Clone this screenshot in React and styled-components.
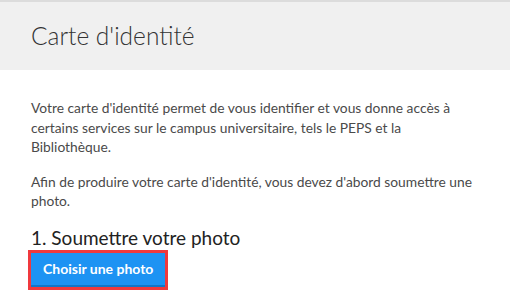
import React from 'react'
import styled, { createGlobalStyle } from 'styled-components'

const GlobalStyle = createGlobalStyle`
    body {
        margin: 0;
        background: #fff;
        font-family: "Lato", "Open Sans", sans-serif;
        color: #444;
    }
`

const Page = styled.div`
    width: 510px;
    height: 294px;
    overflow: hidden;
`

const Header = styled.header`
    background: #f0f0f0;
    border-top: 2px solid #dcdcdc;
    height: 68px;
    display: flex;
    align-items: center;
    padding: 0 31px;
`

const Title = styled.h1`
    margin: 0 0 2px;
    font-size: 24.5px;
    font-weight: 300;
    color: #333;
`

const Content = styled.main`
    padding: 28px 31px 0;
`

const Text = styled.p`
    margin: 0 0 15px;
    font-size: 13.8px;
    line-height: 19.5px;
    color: #4a4a4a;
`

const Step = styled.h2`
    margin: 0;
    font-size: 19px;
    line-height: 24px;
    font-weight: 400;
    color: #222;
`

const Highlight = styled.div`
    display: inline-block;
    border: 3px solid #f0393d;
    margin-left: -3px;
`

const Button = styled.button`
    display: block;
    border: none;
    border-bottom: 2px solid #1276c8;
    background: #1d93f3;
    color: #fff;
    font-family: inherit;
    font-size: 14px;
    font-weight: 700;
    padding: 0 12px;
    height: 34px;
    cursor: pointer;
`

const App = () => {
    return (
        <Page>
            <GlobalStyle />
            <Header>
                <Title>Carte d'identité</Title>
            </Header>
            <Content>
                <Text>
                    Votre carte d'identité permet de vous identifier et vous donne accès à
                    certains services sur le campus universitaire, tels le PEPS et la
                    Bibliothèque.
                </Text>
                <Text>
                    Afin de produire votre carte d'identité, vous devez d'abord soumettre une
                    photo.
                </Text>
                <Step>1. Soumettre votre photo</Step>
                <Highlight>
                    <Button>Choisir une photo</Button>
                </Highlight>
            </Content>
        </Page>
    )
}

export default App
